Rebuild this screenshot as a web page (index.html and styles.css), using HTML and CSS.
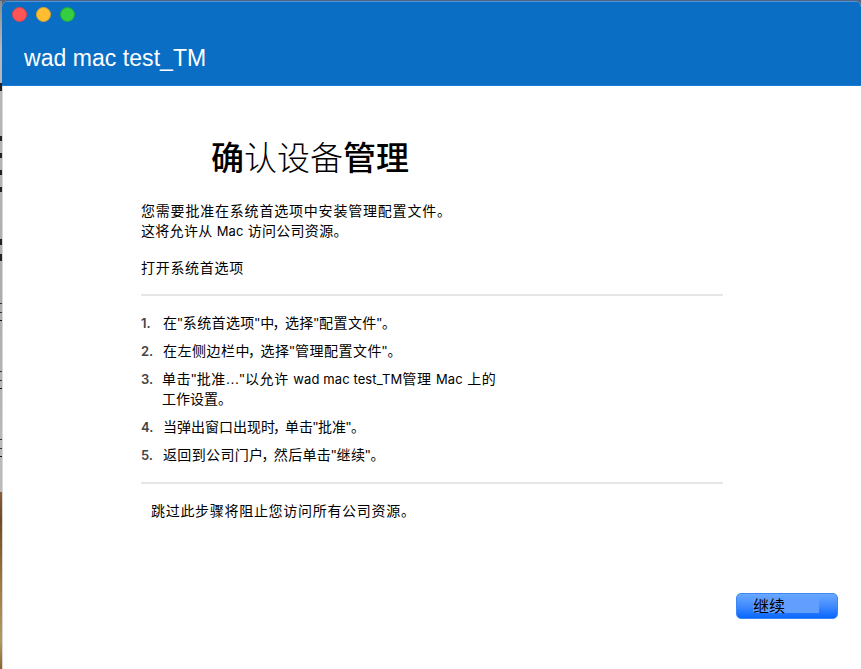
FILE: index.html
```
<!DOCTYPE html>
<html lang="zh-CN">
<head>
<meta charset="utf-8">
<title>wad mac test_TM</title>
<link rel="stylesheet" href="styles.css">
</head>
<body>
<div class="desktop">
  <aside class="behind">
    <div class="behind-app"></div>
    <div class="behind-wall"></div>
  </aside>
  <main class="window">
    <header class="titlebar">
      <div class="lights"><i class="light red"></i><i class="light yellow"></i><i class="light green"></i></div>
      <div class="title">wad mac test_TM</div>
    </header>
    <section class="content">
      <h1><b>确</b>认设备<b>管理</b></h1>
      <div class="intro">
        <p class="l1">您需要批准在系统首选项中安装管理配置文件。</p>
        <p class="l2">这将允许从 <span class="lat">Mac</span> 访问公司资源。</p>
      </div>
      <p class="open">打开系统首选项</p>
      <ol class="steps">
        <li><span class="num">1.</span><p class="s1">在"系统首选项"中<span class="comma">，</span>选择"配置文件"。</p></li>
        <li><span class="num">2.</span><p class="s2">在左侧边栏中<span class="comma">，</span>选择"管理配置文件"。</p></li>
        <li><span class="num">3.</span><p class="s3">单击"批准..."以允许 <span class="lat">wad mac test_TM</span>管理 <span class="lat">Mac</span> 上的<br><span class="s3b">工作设置。</span></p></li>
        <li><span class="num">4.</span><p class="s4">当弹出窗口出现时<span class="comma">，</span>单击"批准"。</p></li>
        <li><span class="num">5.</span><p class="s5">返回到公司门户<span class="comma">，</span>然后单击"继续"。</p></li>
      </ol>
      <p class="note">跳过此步骤将阻止您访问所有公司资源。</p>
    </section>
    <footer class="actions"><button class="continue"><span>继续</span></button></footer>
  </main>
</div>
</body>
</html>
```
FILE: styles.css
```
* { box-sizing: border-box; }
body { margin: 0; overflow: hidden; background: #56627e; }
p, h1, ol { margin: 0; padding: 0; }
.desktop { width: 861px; height: 669px; display: flex; padding-top: 1px; }
.behind { width: 2px; flex: none; display: flex; flex-direction: column; }
.behind-app {
  height: 491px;
  background:
    linear-gradient(#222, #222) 0 82px / 2px 8px no-repeat,
    linear-gradient(#222, #222) 0 135px / 2px 5px no-repeat,
    linear-gradient(#222, #222) 0 152px / 2px 5px no-repeat,
    linear-gradient(#222, #222) 0 169px / 2px 5px no-repeat,
    linear-gradient(#222, #222) 0 186px / 2px 5px no-repeat,
    linear-gradient(#222, #222) 0 238px / 2px 6px no-repeat,
    linear-gradient(#222, #222) 0 253px / 2px 7px no-repeat,
    linear-gradient(#333, #333) 0 302px / 2px 1px no-repeat,
    linear-gradient(#333, #333) 0 311px / 2px 1px no-repeat,
    linear-gradient(#111, #111) 0 319px / 2px 1px no-repeat,
    linear-gradient(#333, #333) 0 370px / 2px 1px no-repeat,
    linear-gradient(#333, #333) 0 379px / 2px 1px no-repeat,
    linear-gradient(#111, #111) 0 387px / 2px 1px no-repeat,
    linear-gradient(#333, #333) 0 438px / 2px 1px no-repeat,
    linear-gradient(#333, #333) 0 447px / 2px 1px no-repeat,
    linear-gradient(#111, #111) 0 455px / 2px 1px no-repeat,
    linear-gradient(#8b8e92, #b9b9b9 10%, #adadad 60%, #bcbcbc);
}
.behind-wall { flex: 1; background: linear-gradient(#8a5c35, #744821 16%, #a37c45 55%, #b39a60 84%, #8e642f); }
.window { flex: 1; display: flex; flex-direction: column; background: linear-gradient(#d8d8d8, #d8d8d8) 0 0 / 1px 100% no-repeat #fff; border-radius: 6px 6px 0 0; overflow: hidden; }
.titlebar { height: 85px; flex: none; background: #0b6ec5; border-top: 1px solid #4a96dc; border-bottom: 1px solid #1c7bd6; }
.lights { display: flex; gap: 10px; padding: 5px 0 0 10px; }
.light { width: 15px; height: 15px; margin-right: -1px; border-radius: 50%; }
.red { background: #ff5655; border: 1px solid #d9434d; }
.yellow { background: #ffbd2f; border: 1px solid #d9a036; }
.green { background: #35cd42; border: 1px solid #20a93b; }
.title { margin: 22px 0 0 22px; font: 23px/28px "Liberation Sans", sans-serif; color: #fff; letter-spacing: 0.05px; white-space: nowrap; }
.content { width: 582px; margin-left: 139px; color: #000; font: 14px/20px "Liberation Sans", "Noto Sans CJK SC", sans-serif; white-space: nowrap; }
h1 { margin: 50px 0 0 70px; font: 300 33px/40px "Noto Sans CJK SC", sans-serif; }
h1 b { font-weight: 500; }
.intro { margin-top: 25px; }
.l1 { letter-spacing: 0.8px; }
.l2 { letter-spacing: 0.3px; }
.lat { font-family: Inter, sans-serif; font-size: 13px; letter-spacing: 0.1px; }
.open { margin-top: 17px; letter-spacing: 0.7px; }
.steps { list-style: none; margin-top: 16px; padding: 17px 0 17px; border: solid #e6e6e6; border-width: 2px 0; display: flex; flex-direction: column; gap: 8px; }
.steps li { display: flex; }
.num { width: 22px; flex: none; font: 600 13px/20px Inter, sans-serif; color: #444; }
.comma { font-family: "Noto Sans CJK SC", sans-serif; font-feature-settings: "halt"; line-height: 1; margin: 0 5px 0 -2px; }
.s1 { letter-spacing: 0.4px; }
.s2 { letter-spacing: 0.5px; }
.s3 { letter-spacing: 0.6px; margin-left: -1px; }
.s3b { letter-spacing: 0; }
.s5 { letter-spacing: 0.35px; }
.note { margin: 17px 0 0 10px; letter-spacing: 0.7px; }
.actions { margin-top: auto; display: flex; justify-content: flex-end; padding: 0 23px 50px 0; }
.continue { width: 102px; height: 26px; padding: 4px 16px 4px; border: 1px solid #3d86f5; border-radius: 5px; background: linear-gradient(#6aa9ff, #3c88fd 55%, #0866ff); display: flex; }
.continue span { width: 66px; height: 15px; background: #629efe; font: 16px/15px "Noto Sans CJK SC", sans-serif; color: #000; text-align: left; }
```
